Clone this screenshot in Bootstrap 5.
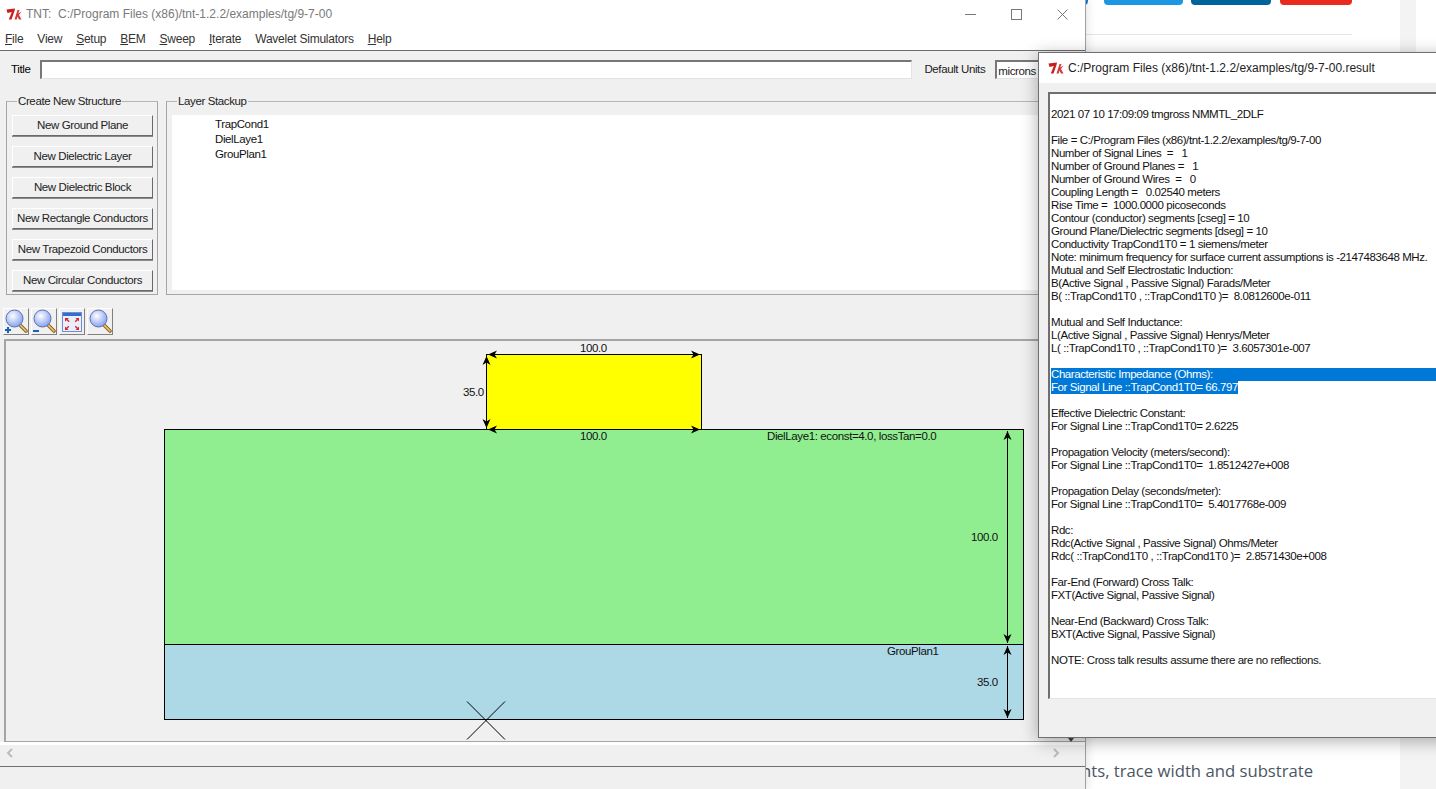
<!DOCTYPE html>
<html lang="en">
<head>
<meta charset="utf-8">
<title>TNT</title>
<link href="https://cdn.jsdelivr.net/npm/bootstrap@5.3.0/dist/css/bootstrap.min.css" rel="stylesheet">
<style>
html,body{height:100%;margin:0;overflow:hidden}
body{background:#fff;font-family:"Liberation Sans",Arial,sans-serif;font-size:11.5px;letter-spacing:-.38px;color:#000;line-height:13px}
.desk{position:relative;width:1436px;height:789px;overflow:hidden}
/* page behind */
.webpage{position:absolute;left:1085px;top:0;width:351px;height:789px;background:#fff}
.web-side{position:absolute;left:315px;top:0;width:16px;height:100px;background:#f3f3f3}
.web-side-low{position:absolute;left:315px;top:100px;width:36px;height:689px;background:#f3f3f3}
.web-btn{position:absolute;top:0;height:5px;border-radius:0 0 4px 4px}
.web-hr{position:absolute;left:0;top:34px;width:267px;border-top:1px solid #e4e4e4}
.web-text{position:absolute;left:-4px;top:760px;font:16.7px/22px "Open Sans",sans-serif;letter-spacing:0;color:#4b5663;white-space:nowrap}
/* main window */
.win-main{position:absolute;left:0;top:0;width:1086px;height:789px;background:#f0f0f0;border-right:1px solid #a0a0a0;box-shadow:0 0 10px rgba(0,0,0,.15)}
.win-title{height:28px;background:#fff;color:#7a7a7a;font-size:12px;letter-spacing:0;gap:4px;padding-left:6px}
.win-ctrls{margin-left:auto;gap:0}
.win-ctrl{width:46px;height:28px;display:flex;align-items:center;justify-content:center}
.menu-bar{height:23px;background:#fff;border-bottom:1px solid #6d6d6d;padding-left:5px;gap:14px;color:#333;font-size:12px;letter-spacing:-.25px}
.menu-bar u{text-underline-offset:1px}
.title-row{height:36px;padding-left:11px;gap:10px}
.tk-input{height:19px;background:#fff;border:1px solid #e3e3e3;border-left:2px solid #777;border-top:2px solid #777}
.title-input{width:872px}
.units-lab{margin-left:2px;color:#222}
.units-input{width:60px;padding:3px 1px 0;color:#222;white-space:nowrap}
.row-groups{padding:0 0 0 6px;gap:8px;height:210px}
.grp{position:relative;border:1px solid #a5a5a5;border-top-color:#b5b5b5;margin-top:14px}
.grp-label{position:absolute;top:-7px;left:10px;background:#f0f0f0;padding:0 1px;color:#222;white-space:nowrap}
.grp-create{width:152px;height:194px;padding:13px 5px 0 5px;gap:10px}
.tk-btn{height:21px;width:141px;flex:none;background:#f0f0f0;border:1px solid;border-color:#fff #6a6a6a #6a6a6a #fff;box-shadow:0 1px 0 #8a8a8a;padding:0;color:#222;font:11.5px/17px "Liberation Sans",sans-serif;letter-spacing:-.38px;text-align:center;white-space:nowrap}
.grp-layers{width:900px;height:194px;padding:13px 0 0 5px}
.layer-list{background:#fff;height:175px;padding:2px 0 0 43px;color:#111;line-height:15px}
.tool-row{height:38px;padding:11px 0 0 3px;gap:2px}
.tool-btn{width:26px;height:27px;background:#f0f0f0;border:1px solid;border-color:#fff #808080 #808080 #fff;padding:0;display:flex;align-items:center;justify-content:center}
.canvas-box{position:absolute;left:4px;top:339px;width:1082px;height:403px;border:2px solid #a5a5a5;border-right:0;border-bottom-width:1px;overflow:hidden}
.shape{position:absolute;border:1px solid #000}
.s-cond{left:480px;top:13px;width:216px;height:76px;background:#ff0}
.s-diel{left:158px;top:88px;width:860px;height:216px;background:#90ee90}
.s-gnd{left:158px;top:303px;width:860px;height:76px;background:#add8e6}
.dim{position:absolute;color:#111;white-space:nowrap;line-height:13px}
.dim-svg{position:absolute;left:0;top:0}
.scroll-bar{position:absolute;left:0;top:742px;width:1085px;height:25px;border-top:3px solid #fff;background:#f0f0f0;border-bottom:1px solid #6f6f6f}
.scroll-l{position:absolute;left:6px;top:3px}
.scroll-r{position:absolute;left:1052px;top:3px}
.drop-tri{position:absolute;left:1068px;top:738px;width:0;height:0;border-left:3px solid transparent;border-right:3px solid transparent;border-top:4px solid #444}
/* result window */
.win-result{position:absolute;left:1038px;top:52px;width:420px;height:686px;background:#f0f0f0;border:1px solid #6f6f6f;box-shadow:0 3px 16px rgba(0,0,0,.32)}
.res-title{height:30px;background:#fff;padding-left:9px;gap:4px;color:#222;font-size:12px;letter-spacing:0}
.res-text{position:absolute;left:9px;top:39px;width:410px;height:607px;background:#fff;border-left:2px solid #6f6f6f;border-top:2px solid #6f6f6f;border-bottom:1px solid #e3e3e3;padding-top:14px;padding-left:1px;overflow:hidden}
.res-line{height:13px;white-space:pre;color:#111;letter-spacing:-.42px}
.sel-full{background:#0078d7;color:#fff}
.sel-part{background:#0078d7;color:#fff;display:inline-block}
</style>
</head>
<body>
<div class="desk">
  <div class="webpage">
    <div class="web-side"></div>
    <div class="web-side-low"></div>
    <div class="web-btn" style="left:-10px;width:13px;background:#1877d2"></div>
    <div class="web-btn" style="left:19px;width:79px;background:#1d97e2"></div>
    <div class="web-btn" style="left:106px;width:80px;background:#00639c"></div>
    <div class="web-btn" style="left:195px;width:72px;background:#eb2a1e"></div>
    <div class="web-hr"></div>
    <div class="web-text">nts, trace width and substrate</div>
  </div>

  <div class="win-main">
    <div class="win-title d-flex align-items-center">
      <svg width="16" height="14" viewBox="0 0 16 14"><path d="M0.5 2.5 L9 1.5 L8.5 4 L5.5 12.5 L2.8 12.5 L5.8 5 L1.5 6Z" fill="#c81e1e"/><path d="M8.5 12.5 L11.5 3 L13.5 3 L12.2 6.5 L15.5 4.5 L13 8 L15.5 12.5 L13 12.5 L11.5 9.5 L10.7 12.5Z" fill="#d23a3a"/></svg>
      <span>TNT:&nbsp; C:/Program Files (x86)/tnt-1.2.2/examples/tg/9-7-00</span>
      <div class="win-ctrls d-flex">
        <div class="win-ctrl"><svg width="11" height="11"><path d="M0 5.5H11" stroke="#777"/></svg></div>
        <div class="win-ctrl"><svg width="11" height="11"><rect x=".5" y=".5" width="10" height="10" fill="none" stroke="#777"/></svg></div>
        <div class="win-ctrl"><svg width="11" height="11"><path d="M.5 .5L10.5 10.5M10.5 .5L.5 10.5" stroke="#777"/></svg></div>
      </div>
    </div>
    <div class="menu-bar d-flex align-items-center">
      <span><u>F</u>ile</span><span>View</span><span><u>S</u>etup</span><span><u>B</u>EM</span><span><u>S</u>weep</span><span><u>I</u>terate</span><span>Wavelet Simulators</span><span><u>H</u>elp</span>
    </div>
    <div class="title-row d-flex align-items-center">
      <span>Title</span>
      <div class="tk-input title-input"></div>
      <span class="units-lab">Default Units</span>
      <div class="tk-input units-input">microns</div>
    </div>
    <div class="row-groups d-flex">
      <div class="grp grp-create d-flex flex-column">
        <span class="grp-label">Create New Structure</span>
        <button class="tk-btn" type="button">New Ground Plane</button>
        <button class="tk-btn" type="button">New Dielectric Layer</button>
        <button class="tk-btn" type="button">New Dielectric Block</button>
        <button class="tk-btn" type="button">New Rectangle Conductors</button>
        <button class="tk-btn" type="button">New Trapezoid Conductors</button>
        <button class="tk-btn" type="button">New Circular Conductors</button>
      </div>
      <div class="grp grp-layers">
        <span class="grp-label">Layer Stackup</span>
        <div class="layer-list"><div>TrapCond1</div><div>DielLaye1</div><div>GrouPlan1</div></div>
      </div>
    </div>
    <div class="tool-row d-flex">
      <button class="tool-btn" type="button"><svg width="24" height="25" viewBox="0 0 24 25"><defs><radialGradient id="gl" cx=".4" cy=".35" r=".7"><stop offset="0" stop-color="#fff"/><stop offset="1" stop-color="#7f9df0"/></radialGradient></defs><path d="M15 15L22 22" stroke="#8a6420" stroke-width="3.6" stroke-linecap="round"/><path d="M15 15L22 22" stroke="#edc86c" stroke-width="1.6" stroke-linecap="round"/><circle cx="10.5" cy="9.5" r="8.5" fill="url(#gl)" stroke="#5a6fb0"/><path d="M1 21H7M4 18V24" stroke="#1763b8" stroke-width="2"/></svg></button>
      <button class="tool-btn" type="button"><svg width="24" height="25" viewBox="0 0 24 25"><path d="M15 15L22 22" stroke="#8a6420" stroke-width="3.6" stroke-linecap="round"/><path d="M15 15L22 22" stroke="#edc86c" stroke-width="1.6" stroke-linecap="round"/><circle cx="10.5" cy="9.5" r="8.5" fill="url(#gl)" stroke="#5a6fb0"/><path d="M1 22H7" stroke="#1763b8" stroke-width="2"/></svg></button>
      <button class="tool-btn" type="button"><svg width="20" height="20" viewBox="0 0 20 20"><rect x=".5" y=".5" width="19" height="19" fill="#e8eefc" stroke="#6d8ed6"/><rect x="1" y="1" width="18" height="3" fill="#2f6fd0"/><path d="M3 6h4l-1.3 1.3 2 2-1 1-2-2L3 9.5zM17 6v3.5l-1.3-1.3-2 2-1-1 2-2L13.4 6zM3 18v-3.5l1.3 1.3 2-2 1 1-2 2L6.6 18zM17 18h-3.5l1.3-1.3-2-2 1-1 2 2 1.2-1.2z" fill="#d92a20"/></svg></button>
      <button class="tool-btn" type="button"><svg width="24" height="25" viewBox="0 0 24 25"><path d="M15 15L22 22" stroke="#8a6420" stroke-width="3.6" stroke-linecap="round"/><path d="M15 15L22 22" stroke="#edc86c" stroke-width="1.6" stroke-linecap="round"/><circle cx="10.5" cy="9.5" r="8.5" fill="url(#gl)" stroke="#5a6fb0"/></svg></button>
    </div>
    <div class="canvas-box">
      <div class="shape s-cond"></div>
      <div class="shape s-diel"></div>
      <div class="shape s-gnd"></div>
      <svg class="dim-svg" width="1081" height="401" viewBox="0 0 1081 401">
        <defs>
          <marker id="ah" markerUnits="userSpaceOnUse" markerWidth="10" markerHeight="9" refX="9" refY="4.5" orient="auto-start-reverse"><path d="M0 .5L9 4.5L0 8.5L2.5 4.5Z" fill="#000"/></marker>
        </defs>
        <path d="M482 13.5H694" stroke="#000" marker-start="url(#ah)" marker-end="url(#ah)"/>
        <path d="M482 88.5H694" stroke="#000" marker-start="url(#ah)" marker-end="url(#ah)"/>
        <path d="M480.5 15V87" stroke="#000" marker-start="url(#ah)" marker-end="url(#ah)"/>
        <path d="M1001.5 90V302" stroke="#000" marker-start="url(#ah)" marker-end="url(#ah)"/>
        <path d="M1001.5 305V377" stroke="#000" marker-start="url(#ah)" marker-end="url(#ah)"/>
        <path d="M461 360.5L499 398.5M499 360.5L461 398.5" stroke="#000" stroke-width="1" fill="none"/>
      </svg>
      <span class="dim" style="left:574px;top:1px">100.0</span>
      <span class="dim" style="left:574px;top:89px">100.0</span>
      <span class="dim" style="left:457px;top:45px">35.0</span>
      <span class="dim" style="left:761px;top:89px">DielLaye1: econst=4.0, lossTan=0.0</span>
      <span class="dim" style="left:965px;top:190px">100.0</span>
      <span class="dim" style="left:881px;top:304px">GrouPlan1</span>
      <span class="dim" style="left:971px;top:335px">35.0</span>
    </div>
    <div class="scroll-bar">
      <svg class="scroll-l" width="8" height="10"><path d="M6 1L2 5L6 9" fill="none" stroke="#bcbcbc" stroke-width="2"/></svg>
      <svg class="scroll-r" width="8" height="10"><path d="M2 1L6 5L2 9" fill="none" stroke="#bcbcbc" stroke-width="2"/></svg>
    </div>
    <div class="drop-tri"></div>
  </div>

  <div class="win-result">
    <div class="res-title d-flex align-items-center">
      <svg width="16" height="14" viewBox="0 0 16 14"><path d="M0.5 2.5 L9 1.5 L8.5 4 L5.5 12.5 L2.8 12.5 L5.8 5 L1.5 6Z" fill="#c81e1e"/><path d="M8.5 12.5 L11.5 3 L13.5 3 L12.2 6.5 L15.5 4.5 L13 8 L15.5 12.5 L13 12.5 L11.5 9.5 L10.7 12.5Z" fill="#d23a3a"/></svg>
      <span>C:/Program Files (x86)/tnt-1.2.2/examples/tg/9-7-00.result</span>
    </div>
    <div class="res-text">
<div class="res-line">2021 07 10 17:09:09 tmgross NMMTL_2DLF</div>
<div class="res-line"> </div>
<div class="res-line">File = C:/Program Files (x86)/tnt-1.2.2/examples/tg/9-7-00</div>
<div class="res-line">Number of Signal Lines  =   1</div>
<div class="res-line">Number of Ground Planes =   1</div>
<div class="res-line">Number of Ground Wires  =   0</div>
<div class="res-line">Coupling Length =   0.02540 meters</div>
<div class="res-line">Rise Time =  1000.0000 picoseconds</div>
<div class="res-line">Contour (conductor) segments [cseg] = 10</div>
<div class="res-line">Ground Plane/Dielectric segments [dseg] = 10</div>
<div class="res-line">Conductivity TrapCond1T0 = 1 siemens/meter</div>
<div class="res-line">Note: minimum frequency for surface current assumptions is -2147483648 MHz.</div>
<div class="res-line">Mutual and Self Electrostatic Induction:</div>
<div class="res-line">B(Active Signal , Passive Signal) Farads/Meter</div>
<div class="res-line">B( ::TrapCond1T0 , ::TrapCond1T0 )=  8.0812600e-011</div>
<div class="res-line"> </div>
<div class="res-line">Mutual and Self Inductance:</div>
<div class="res-line">L(Active Signal , Passive Signal) Henrys/Meter</div>
<div class="res-line">L( ::TrapCond1T0 , ::TrapCond1T0 )=  3.6057301e-007</div>
<div class="res-line"> </div>
<div class="res-line sel-full">Characteristic Impedance (Ohms):</div>
<div class="res-line"><span class="sel-part">For Signal Line ::TrapCond1T0= 66.797</span></div>
<div class="res-line"> </div>
<div class="res-line">Effective Dielectric Constant:</div>
<div class="res-line">For Signal Line ::TrapCond1T0= 2.6225</div>
<div class="res-line"> </div>
<div class="res-line">Propagation Velocity (meters/second):</div>
<div class="res-line">For Signal Line ::TrapCond1T0=  1.8512427e+008</div>
<div class="res-line"> </div>
<div class="res-line">Propagation Delay (seconds/meter):</div>
<div class="res-line">For Signal Line ::TrapCond1T0=  5.4017768e-009</div>
<div class="res-line"> </div>
<div class="res-line">Rdc:</div>
<div class="res-line">Rdc(Active Signal , Passive Signal) Ohms/Meter</div>
<div class="res-line">Rdc( ::TrapCond1T0 , ::TrapCond1T0 )=  2.8571430e+008</div>
<div class="res-line"> </div>
<div class="res-line">Far-End (Forward) Cross Talk:</div>
<div class="res-line">FXT(Active Signal, Passive Signal)</div>
<div class="res-line"> </div>
<div class="res-line">Near-End (Backward) Cross Talk:</div>
<div class="res-line">BXT(Active Signal, Passive Signal)</div>
<div class="res-line"> </div>
<div class="res-line">NOTE: Cross talk results assume there are no reflections.</div>
    </div>
  </div>
</div>
<script src="https://cdn.jsdelivr.net/npm/bootstrap@5.3.0/dist/js/bootstrap.bundle.min.js"></script>
</body>
</html>
